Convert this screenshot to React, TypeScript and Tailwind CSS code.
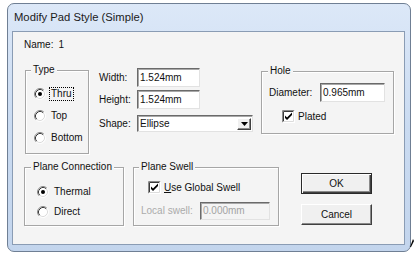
import React from "react";

const Radio = ({ checked }: { checked?: boolean }) => (
  <svg width="12" height="12" viewBox="0 0 12 12" className="shrink-0">
    <circle cx="6" cy="6" r="5" fill="#ffffff" />
    <path d="M2.11 9.89 A5.5 5.5 0 0 1 9.89 2.11" fill="none" stroke="#8a8a8a" />
    <path d="M9.89 2.11 A5.5 5.5 0 0 1 2.11 9.89" fill="none" stroke="#ffffff" />
    <path d="M2.82 9.18 A4.5 4.5 0 0 1 9.18 2.82" fill="none" stroke="#3a3a3a" />
    <path d="M9.18 2.82 A4.5 4.5 0 0 1 2.82 9.18" fill="none" stroke="#dcdcdc" />
    {checked && <circle cx="6" cy="6" r="2" fill="#000000" />}
  </svg>
);

const Check = () => (
  <svg width="13" height="13" viewBox="0 0 13 13" className="shrink-0">
    <rect x="0" y="0" width="13" height="13" fill="#ffffff" />
    <path d="M0.5 12.5 V0.5 H12.5" stroke="#8a8a8a" fill="none" />
    <path d="M0.5 12.5 H12.5 V0.5" stroke="#ffffff" fill="none" />
    <path d="M1.5 11.5 V1.5 H11.5" stroke="#3a3a3a" fill="none" />
    <path d="M1.5 11.5 H11.5 V1.5" stroke="#dcdcdc" fill="none" />
    <polygon points="3,5.5 5,7.5 10,2.5 10,5 5,10 3,8" fill="#000000" />
  </svg>
);

const groupCls =
  "border border-[#a6a6a6] shadow-[inset_1px_1px_0_#ffffff,1px_1px_0_#ffffff]";
const labelCls = "-mt-[7px] px-[2px] w-fit bg-[#f4f4f4] leading-[12px]";
const sunken =
  "border border-t-[#6a6a6a] border-l-[#6a6a6a] border-r-[#e2e2e2] border-b-[#e2e2e2] shadow-[inset_1px_1px_0_#a8a8a8]";

export default function App() {
  return (
    <div className="relative w-[415px] h-[256px] bg-white pt-[3px] pl-[7px] font-['Liberation_Sans',Arial,sans-serif] text-[#111111] overflow-hidden">
      <div className="w-[404px] h-[249px] rounded-[7px] border border-[#6f7f94] bg-linear-to-b from-[#dce8f8] via-[#cadbf1] to-[#c3d5ed] flex flex-col pl-[4px] pr-[5px] pb-[6px]">
        <div className="h-[27px] shrink-0 flex items-center pl-[2px] text-[11.25px] text-[#1b1b1b]">
          Modify Pad Style (Simple)
        </div>
        <div className="flex-1 border border-[#8a9cb4] bg-[#f4f4f4] flex flex-col pl-[11px] text-[10px] leading-[12px]">
          {/* Name */}
          <div className="pt-[7px] flex">
            <span>Name:</span>
            <span className="ml-[5px]">1</span>
          </div>

          {/* Row 2 */}
          <div className="flex items-start mt-[13px]">
            <div className={`${groupCls} ml-[1px] mt-[6px] w-[64px] h-[84px]`}>
              <div className={`${labelCls} ml-[5px]`}>Type</div>
              <div className="mt-[10px] flex flex-col gap-[6px] pl-[8px]">
                <div className="flex items-center h-[16px]">
                  <Radio checked />
                  <span className="ml-[3px] border border-dotted border-black px-[1px]">Thru</span>
                </div>
                <div className="flex items-center h-[16px]">
                  <Radio />
                  <span className="ml-[5px]">Top</span>
                </div>
                <div className="flex items-center h-[16px]">
                  <Radio />
                  <span className="ml-[5px]">Bottom</span>
                </div>
              </div>
            </div>

            <div className="ml-[10px] mt-[4px] flex flex-col">
              <div className="flex items-center h-[19px]">
                <span className="w-[38px]">Width:</span>
                <div className={`${sunken} bg-white w-[63px] h-[19px] flex items-center pl-[2px]`}>1.524mm</div>
              </div>
              <div className="flex items-center h-[19px] mt-[3px]">
                <span className="w-[38px]">Height:</span>
                <div className={`${sunken} bg-white w-[63px] h-[19px] flex items-center pl-[2px]`}>1.524mm</div>
              </div>
              <div className="flex items-center h-[17px] mt-[6px]">
                <span className="w-[38px]">Shape:</span>
                <div className={`${sunken} bg-white w-[116px] h-[17px] flex items-center pl-[2px] pr-[1px]`}>
                  <span className="flex-1">Ellipse</span>
                  <div className="w-[14px] h-[12px] bg-[#f0f0f0] border border-t-white border-l-white border-r-[#404040] border-b-[#404040] shadow-[inset_-1px_-1px_0_#8a8a8a] flex items-center justify-center">
                    <svg width="7" height="4" viewBox="0 0 7 4">
                      <polygon points="0,0 7,0 3.5,4" fill="#000000" />
                    </svg>
                  </div>
                </div>
              </div>
            </div>

            <div className={`${groupCls} ml-[8px] mt-[7px] w-[133px] h-[63px]`}>
              <div className={`${labelCls} ml-[6px]`}>Hole</div>
              <div className="mt-[6px] flex items-center pl-[7px] h-[19px]">
                <span className="w-[51px]">Diameter:</span>
                <div className={`${sunken} bg-white w-[65px] h-[19px] flex items-center pl-[2px]`}>0.965mm</div>
              </div>
              <div className="mt-[8px] flex items-center pl-[20px] h-[13px]">
                <Check />
                <span className="ml-[3px]">Plated</span>
              </div>
            </div>
          </div>

          {/* Row 3 */}
          <div className="flex items-start mt-[7px]">
            <div className={`${groupCls} mt-[6px] w-[100px] h-[59px]`}>
              <div className={`${labelCls} ml-[6px]`}>Plane Connection</div>
              <div className="mt-[11px] flex flex-col gap-[4px] pl-[12px]">
                <div className="flex items-center h-[16px]">
                  <Radio checked />
                  <span className="ml-[5px]">Thermal</span>
                </div>
                <div className="flex items-center h-[16px]">
                  <Radio />
                  <span className="ml-[5px]">Direct</span>
                </div>
              </div>
            </div>

            <div className={`${groupCls} ml-[9px] mt-[6px] w-[146px] h-[59px]`}>
              <div className={`${labelCls} ml-[5px]`}>Plane Swell</div>
              <div className="mt-[8px] flex items-center pl-[14px] h-[13px]">
                <Check />
                <span className="ml-[3px]">
                  <span className="underline">U</span>se Global Swell
                </span>
              </div>
              <div className="mt-[8px] flex items-center pl-[7px] h-[18px]">
                <span className="w-[59px] text-[#ababab]">Local swell:</span>
                <div className={`${sunken} bg-[#f4f4f4] w-[70px] h-[18px] flex items-center pl-[2px] text-[#a3a3a3]`}>0.000mm</div>
              </div>
            </div>

            <div className="ml-[22px] mt-[12px] flex flex-col gap-[10px]">
              <div className="w-[71px] h-[21px] bg-[#f0f0f0] border border-[#2a2a2a] shadow-[inset_1px_1px_0_#ffffff,inset_-1px_-1px_0_#404040,inset_-2px_-2px_0_#8a8a8a] flex items-center justify-center">
                OK
              </div>
              <div className="w-[71px] h-[21px] bg-[#f0f0f0] border border-t-white border-l-white border-r-[#404040] border-b-[#404040] shadow-[inset_-1px_-1px_0_#8a8a8a] flex items-center justify-center">
                Cancel
              </div>
            </div>
          </div>
        </div>
      </div>
      <svg className="absolute left-[410px] top-[239px]" width="4" height="8" viewBox="0 0 4 8">
        <polygon points="0,8 3,0 4,2 1,8" fill="#000000" />
      </svg>
    </div>
  );
}
